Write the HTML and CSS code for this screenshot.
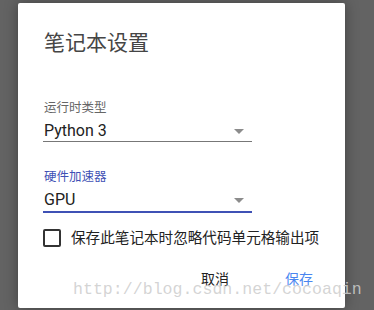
FILE: index.html
```html
<!DOCTYPE html>
<html lang="zh">
<head>
<meta charset="utf-8">
<link rel="stylesheet" href="styles.css">
</head>
<body>
<div class="dialog">
  <div class="title">笔记本设置</div>
  <div class="field first">
    <div class="label">运行时类型</div>
    <div class="select">
      <span class="value">Python 3</span>
      <span class="arrow"></span>
    </div>
  </div>
  <div class="field focused">
    <div class="label">硬件加速器</div>
    <div class="select">
      <span class="value">GPU</span>
      <span class="arrow"></span>
    </div>
  </div>
  <label class="check-row">
    <span class="checkbox"></span>
    <span class="check-text">保存此笔记本时忽略代码单元格输出项</span>
  </label>
  <div class="actions">
    <span class="btn">取消</span>
    <span class="btn primary">保存</span>
  </div>
</div>
<div class="watermark">http://blog.csdn.net/cocoaqin</div>
</body>
</html>
```

FILE: styles.css
```css
html, body {
  margin: 0;
  padding: 0;
}
body {
  width: 374px;
  height: 310px;
  overflow: hidden;
  background: #636363;
  font-family: Roboto, "Noto Sans CJK SC", sans-serif;
  position: relative;
}
.dialog {
  margin: 3px 0 0 18px;
  width: 327px;
  height: 305px;
  box-sizing: border-box;
  padding: 28px 0 0 25px;
  background: #fff;
  border-radius: 2px;
  box-shadow: 0 0 14px rgba(0, 0, 0, 0.35);
  display: flex;
  flex-direction: column;
}
.title {
  font-size: 21px;
  line-height: 24px;
  color: #454545;
  padding-left: 1px;
}
.field {
  width: 209px;
  margin-top: 27px;
}
.field.first {
  margin-top: 45px;
}
.label {
  font-size: 12.5px;
  line-height: 16px;
  color: #666;
  margin-bottom: 5px;
  padding-left: 1px;
}
.select {
  height: 20px;
  display: flex;
  align-items: center;
  justify-content: space-between;
  border-bottom: 1px solid #777;
}
.value {
  font-size: 16px;
  line-height: 20px;
  color: #222;
  padding-left: 1px;
}
.arrow {
  width: 0;
  height: 0;
  border-left: 5px solid transparent;
  border-right: 5px solid transparent;
  border-top: 5px solid #8c8c8c;
  margin-right: 8px;
}
.focused .label {
  color: #3f51b5;
}
.focused .select {
  border-bottom: 2px solid #3f51b5;
  padding-bottom: 1px;
}
.check-row {
  display: flex;
  align-items: center;
  margin-top: 16px;
  height: 18px;
}
.checkbox {
  flex: none;
  width: 14px;
  height: 14px;
  border: 2px solid #333;
  border-radius: 2px;
  margin-right: 10px;
}
.check-text {
  font-size: 14.6px;
  line-height: 18px;
  color: #222;
  white-space: nowrap;
}
.actions {
  display: flex;
  justify-content: flex-end;
  gap: 56px;
  margin-top: 22px;
  margin-right: 32px;
}
.btn {
  font-size: 14px;
  line-height: 20px;
  color: #222;
}
.btn.primary {
  color: #4a86f0;
}
.watermark {
  position: absolute;
  left: 73px;
  top: 281px;
  font-family: "Liberation Mono", monospace;
  font-size: 16.6px;
  line-height: 17px;
  color: rgba(205, 205, 205, 0.85);
  white-space: nowrap;
}
```
